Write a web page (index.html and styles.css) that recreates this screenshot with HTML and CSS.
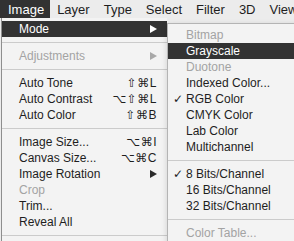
FILE: index.html
```html
<!DOCTYPE html>
<html>
<head>
<meta charset="utf-8">
<link rel="stylesheet" href="styles.css">
</head>
<body>
<div class="screen">
  <div class="menubar">
    <span class="bar-item active first">Image</span>
    <span class="bar-item">Layer</span>
    <span class="bar-item">Type</span>
    <span class="bar-item">Select</span>
    <span class="bar-item">Filter</span>
    <span class="bar-item">3D</span>
    <span class="bar-item">View</span>
  </div>
  <div class="dropdowns">
    <div class="menu">
      <div class="row hl"><span>Mode</span><span class="tri tri-white"></span></div>
      <div class="sep"></div>
      <div class="row dis"><span>Adjustments</span><span class="tri tri-dis"></span></div>
      <div class="sep"></div>
      <div class="row"><span>Auto Tone</span><span class="key">⇧⌘L</span></div>
      <div class="row"><span>Auto Contrast</span><span class="key">⌥⇧⌘L</span></div>
      <div class="row"><span>Auto Color</span><span class="key">⇧⌘B</span></div>
      <div class="sep"></div>
      <div class="row"><span>Image Size...</span><span class="key">⌥⌘I</span></div>
      <div class="row"><span>Canvas Size...</span><span class="key">⌥⌘C</span></div>
      <div class="row"><span>Image Rotation</span><span class="tri"></span></div>
      <div class="row dis"><span>Crop</span></div>
      <div class="row"><span>Trim...</span></div>
      <div class="row"><span>Reveal All</span></div>
      <div class="sep"></div>
    </div>
    <div class="submenu">
      <div class="srow dis"><span class="chk"></span>Bitmap</div>
      <div class="srow hl"><span class="chk"></span>Grayscale</div>
      <div class="srow dis"><span class="chk"></span>Duotone</div>
      <div class="srow"><span class="chk"></span>Indexed Color...</div>
      <div class="srow"><span class="chk">✓</span>RGB Color</div>
      <div class="srow"><span class="chk"></span>CMYK Color</div>
      <div class="srow"><span class="chk"></span>Lab Color</div>
      <div class="srow"><span class="chk"></span>Multichannel</div>
      <div class="sep"></div>
      <div class="srow"><span class="chk">✓</span>8 Bits/Channel</div>
      <div class="srow"><span class="chk"></span>16 Bits/Channel</div>
      <div class="srow"><span class="chk"></span>32 Bits/Channel</div>
      <div class="sep"></div>
      <div class="srow dis"><span class="chk"></span>Color Table...</div>
    </div>
  </div>
</div>
</body>
</html>
```

FILE: styles.css
```css
html, body {
  margin: 0;
  padding: 0;
  background: #ececec;
  overflow: hidden;
}

.screen {
  width: 294px;
  height: 241px;
  overflow: hidden;
  font-family: "Liberation Sans", Arial, sans-serif;
  font-size: 12px;
  color: #1e1e1e;
}

.menubar {
  display: flex;
  height: 18px;
  background: #ececec;
  font-size: 13px;
  white-space: nowrap;
}

.bar-item {
  display: flex;
  align-items: center;
  padding: 0 7px;
  height: 18px;
  color: #1e1e1e;
}

.bar-item.first {
  padding: 0 6px 0 8px;
}

.bar-item.active {
  background: #323232;
  color: #ffffff;
}

.dropdowns {
  display: flex;
  align-items: flex-start;
  margin-left: 1px;
}

.menu {
  flex: none;
  width: 165px;
  height: 240px;
  padding-top: 3px;
  border-left: 1px solid #8e8e8e;
  background: #f3f3f3;
  box-sizing: content-box;
}

.row {
  display: flex;
  align-items: center;
  justify-content: space-between;
  height: 16px;
  padding: 0 10px 0 17px;
  white-space: nowrap;
}

.hl {
  background: #333333;
  color: #ffffff;
}

.dis {
  color: #a3a3a3;
}

.sep {
  height: 11px;
  display: flex;
  align-items: center;
}

.sep::before {
  content: "";
  display: block;
  width: 100%;
  height: 1px;
  background: #cbcbcb;
}

.key {
  font-family: "Liberation Sans", "DejaVu Sans", sans-serif;
  font-size: 12px;
  letter-spacing: 0.5px;
  color: #1e1e1e;
}

.tri {
  width: 0;
  height: 0;
  border-top: 4px solid transparent;
  border-bottom: 4px solid transparent;
  border-left: 7px solid #2a2a2a;
  margin-right: 0;
}

.tri-white {
  border-left-color: #ffffff;
}

.tri-dis {
  border-left-color: #a8a8a8;
}

.submenu {
  flex: none;
  width: 140px;
  margin-top: 5px;
  padding-top: 3px;
  height: 230px;
  border: 1px solid #b4b4b4;
  border-right: none;
  background: #f3f3f3;
  box-shadow: 0 2px 6px rgba(0, 0, 0, 0.15);
}

.srow {
  display: flex;
  align-items: center;
  height: 16px;
  padding-left: 5px;
  white-space: nowrap;
}

.chk {
  display: inline-block;
  width: 13px;
  font-family: "DejaVu Sans", sans-serif;
  font-size: 12px;
  line-height: 16px;
}
```
